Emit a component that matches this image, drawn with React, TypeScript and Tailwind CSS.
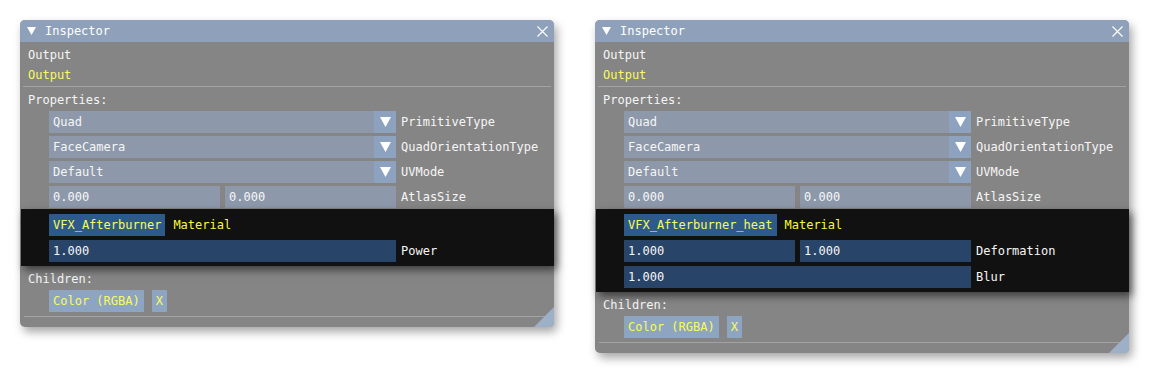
import React from 'react';

const FONT = { fontFamily: '"DejaVu Sans Mono", "Liberation Mono", monospace' };

const DownArrow: React.FC<{ className?: string }> = ({ className }) => (
    <svg width="11" height="10" viewBox="0 0 11 10" className={className}>
        <polygon points="0,0 11,0 5.5,10" fill="#ffffff" />
    </svg>
);

const Combo: React.FC<{ value: string; label: string }> = ({ value, label }) => (
    <div className="flex items-center h-[22px]">
        <div className="flex w-[347px] h-full">
            <div className="flex-1 flex items-center pl-1 bg-[#8d99aa] text-[#f6f6f6]">{value}</div>
            <div className="w-[22px] flex items-center justify-center bg-[#8ca2bf]">
                <DownArrow />
            </div>
        </div>
        <span className="ml-[5px] text-[#f6f6f6]">{label}</span>
    </div>
);

const FieldRow: React.FC<{ values: string[]; label: string; dark?: boolean }> = ({ values, label, dark }) => (
    <div className="flex items-center h-[22px]">
        <div className="flex w-[347px] h-full gap-[5px]">
            {values.map((v, i) => (
                <div
                    key={i}
                    className={`flex-1 flex items-center pl-1 text-[#f6f6f6] ${dark ? 'bg-[#294469]' : 'bg-[#8d99aa]'}`}
                >
                    {v}
                </div>
            ))}
        </div>
        <span className="ml-[5px] text-[#f6f6f6]">{label}</span>
    </div>
);

interface InspectorProps {
    material: string;
    params: { values: string[]; label: string }[];
}

const Inspector: React.FC<InspectorProps> = ({ material, params }) => (
    <div className="relative w-[534px] bg-[#858585] rounded-[5px] shadow-[3px_5px_10px_rgba(0,0,0,0.35)] text-[12px] leading-none">
        {/* title bar */}
        <div className="h-[22px] flex items-center bg-[#8fa1ba] rounded-t-[5px] text-white pl-[7px] pr-[6px]">
            <svg width="9" height="8" viewBox="0 0 9 8">
                <polygon points="0,0 9,0 4.5,8" fill="#ffffff" />
            </svg>
            <span className="ml-[9px]">Inspector</span>
            <svg width="11" height="11" viewBox="0 0 11 11" className="ml-auto">
                <path d="M0.5 0.5 L10.5 10.5 M10.5 0.5 L0.5 10.5" stroke="#ffffff" strokeWidth="1.1" />
            </svg>
        </div>

        <div className="pt-[3px]">
            <div className="h-[20px] flex items-center pl-2 text-[#f6f6f6]">Output</div>
            <div className="h-[20px] flex items-center pl-2 text-[#fafa5c]">Output</div>
            <div className="h-px bg-[#a3a3a3] ml-[3px] mr-[3px] mt-px" />
            <div className="h-[20px] flex items-center pl-2 mt-[3px] text-[#f6f6f6]">Properties:</div>

            <div className="flex flex-col gap-[3px] pl-[29px] mt-px">
                <Combo value="Quad" label="PrimitiveType" />
                <Combo value="FaceCamera" label="QuadOrientationType" />
                <Combo value="Default" label="UVMode" />
                <FieldRow values={['0.000', '0.000']} label="AtlasSize" />
            </div>

            {/* focused material block */}
            <div className="relative z-10 mt-px ml-px bg-[#111111] pt-[5px] pb-[4px] pl-[28px] flex flex-col gap-[4px] shadow-[3px_4px_8px_rgba(0,0,0,0.55)]">
                <div className="flex items-center h-[22px]">
                    <div className="h-full flex items-center px-[4px] bg-[#2e5a8b] text-[#fafa5c]">{material}</div>
                    <span className="ml-2 text-[#fafa3c]">Material</span>
                </div>
                {params.map(p => (
                    <FieldRow key={p.label} values={p.values} label={p.label} dark />
                ))}
            </div>

            <div className="h-[20px] flex items-center pl-2 mt-[3px] text-[#f6f6f6]">Children:</div>
            <div className="flex items-center gap-2 pl-[29px] mt-px h-[22px]">
                <div className="h-full flex items-center px-[4px] bg-[#8ea5c2] text-[#fafa5c]">Color (RGBA)</div>
                <div className="h-full flex items-center px-[4px] bg-[#8ea5c2] text-[#fafa5c]">X</div>
            </div>
            <div className="h-px bg-[#a3a3a3] ml-1 mr-[2px] mt-[4px]" />
            <div className="h-[10px]" />
        </div>

        {/* resize grip */}
        <svg width="20" height="20" viewBox="0 0 20 20" className="absolute right-0 bottom-0">
            <path d="M20 0 L20 15 Q20 20 15 20 L0 20 Z" fill="#9db0c8" />
        </svg>
    </div>
);

const App: React.FC = () => {
    return (
        <div className="w-[1150px] h-[373px] bg-white flex items-start gap-[41px] pl-[20px] pt-[20px]" style={FONT}>
            <Inspector
                material="VFX_Afterburner"
                params={[{ values: ['1.000'], label: 'Power' }]}
            />
            <Inspector
                material="VFX_Afterburner_heat"
                params={[
                    { values: ['1.000', '1.000'], label: 'Deformation' },
                    { values: ['1.000'], label: 'Blur' },
                ]}
            />
        </div>
    );
};

export default App;
